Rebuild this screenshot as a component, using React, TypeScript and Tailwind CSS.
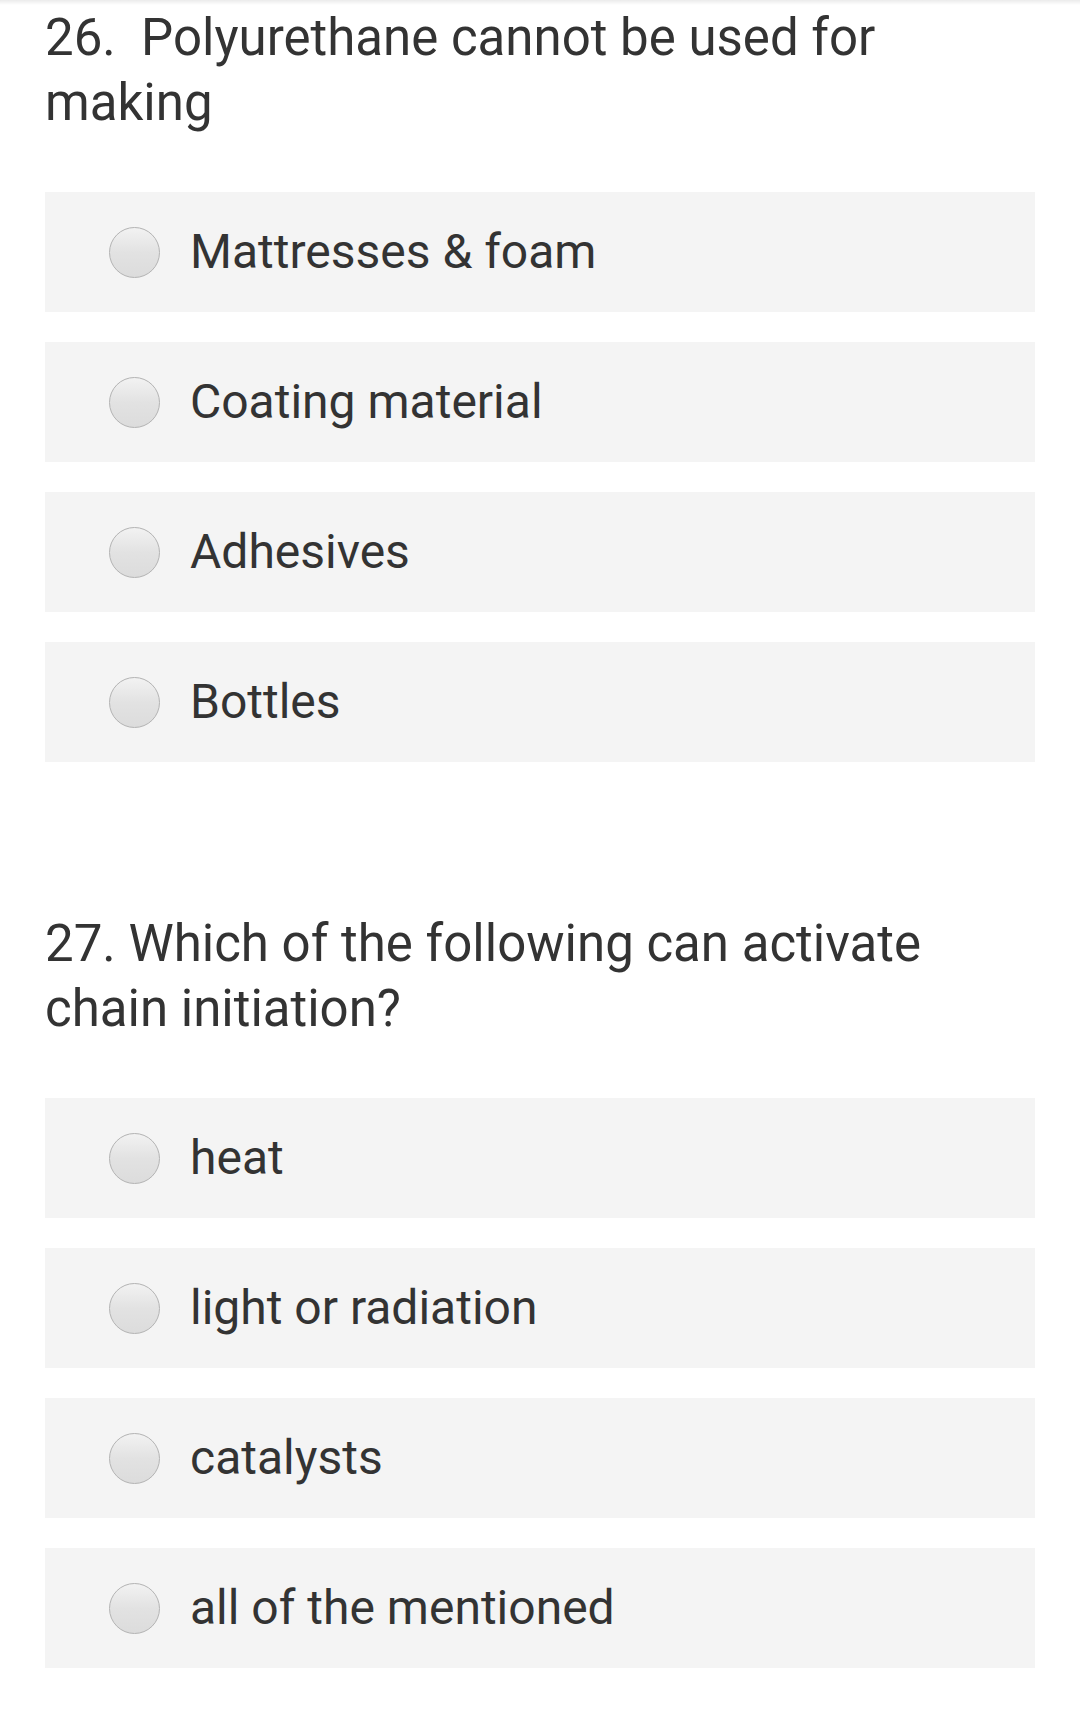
// Quiz page: two multiple-choice questions with radio-style option rows.

const QUESTIONS = [
  {
    title: "26.\u00a0 Polyurethane cannot be used for making",
    options: ["Mattresses & foam", "Coating material", "Adhesives", "Bottles"],
  },
  {
    title: "27. Which of the following can activate chain initiation?",
    options: ["heat", "light or radiation", "catalysts", "all of the mentioned"],
  },
];

function Radio() {
  return (
    <span className="h-[51px] w-[51px] shrink-0 rounded-full border border-[#b3b3b3] bg-gradient-to-b from-[#f2f2f2] via-[#e2e2e2] to-[#dcdcdc]" />
  );
}

export default function App() {
  return (
    <div
      className="min-h-[1732px] w-[1080px] bg-white text-[#333333]"
      style={{ fontFamily: "Roboto, 'Liberation Sans', sans-serif" }}
    >
      {/* faint shadow under the app bar */}
      <div className="h-[5px] bg-gradient-to-b from-[#ebebeb] to-white" />
      <div className="px-[45px]">
        {QUESTIONS.map((q, qi) => (
          <section key={qi} className={qi > 0 ? "mt-[149px]" : ""}>
            <h2 className="text-[51px] leading-[65px] font-normal">{q.title}</h2>
            <div className="mt-[57px] flex flex-col gap-[30px]">
              {q.options.map((opt) => (
                <label
                  key={opt}
                  className="flex h-[120px] items-center gap-[30px] bg-[#f4f4f4] pl-[64px]"
                >
                  <Radio />
                  <span className="text-[48px] leading-none">{opt}</span>
                </label>
              ))}
            </div>
          </section>
        ))}
      </div>
    </div>
  );
}
